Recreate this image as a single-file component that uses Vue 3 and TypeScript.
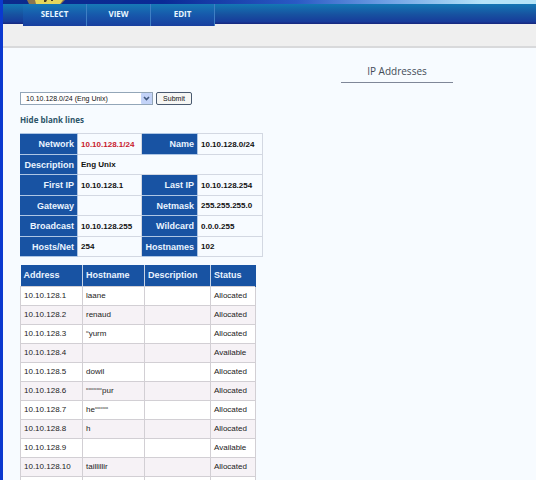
<script setup lang="ts">
import { ref } from 'vue'

interface Host {
  address: string
  hostname: string
  description: string
  status: string
}

interface Field {
  label: string
  value: string
  alert?: boolean
}

const menu: string[] = ['SELECT', 'VIEW', 'EDIT']
const subnets: string[] = ['10.10.128.0/24 (Eng Unix)']
const subnet = ref<string>(subnets[0])

const network: Field[][] = [
  [{ label: 'Network', value: '10.10.128.1/24', alert: true }, { label: 'Name', value: '10.10.128.0/24' }],
  [{ label: 'Description', value: 'Eng Unix' }],
  [{ label: 'First IP', value: '10.10.128.1' }, { label: 'Last IP', value: '10.10.128.254' }],
  [{ label: 'Gateway', value: '' }, { label: 'Netmask', value: '255.255.255.0' }],
  [{ label: 'Broadcast', value: '10.10.128.255' }, { label: 'Wildcard', value: '0.0.0.255' }],
  [{ label: 'Hosts/Net', value: '254' }, { label: 'Hostnames', value: '102' }],
]

const hosts: Host[] = [
  { address: '10.10.128.1', hostname: 'laane', description: '', status: 'Allocated' },
  { address: '10.10.128.2', hostname: 'renaud', description: '', status: 'Allocated' },
  { address: '10.10.128.3', hostname: '“yurm', description: '', status: 'Allocated' },
  { address: '10.10.128.4', hostname: '', description: '', status: 'Available' },
  { address: '10.10.128.5', hostname: 'dowil', description: '', status: 'Allocated' },
  { address: '10.10.128.6', hostname: '““““““pur', description: '', status: 'Allocated' },
  { address: '10.10.128.7', hostname: 'he“““““', description: '', status: 'Allocated' },
  { address: '10.10.128.8', hostname: 'h', description: '', status: 'Allocated' },
  { address: '10.10.128.9', hostname: '', description: '', status: 'Available' },
  { address: '10.10.128.10', hostname: 'taillillir', description: '', status: 'Allocated' },
  { address: '', hostname: '', description: '', status: '' },
]
</script>

<template>
  <div class="page">
    <header>
      <div class="banner">
        <svg class="emblem" viewBox="0 0 40 4" preserveAspectRatio="none" aria-hidden="true">
          <path d="M0 0H38L34 4H2Z" fill="#8b7650" />
          <path d="M8 0H36L33 4H9Z" fill="#e6d75c" />
          <path d="M17 0h3l-1 2h-2zM24 0h2v1h-2z" fill="#4b4020" />
        </svg>
      </div>
      <nav class="menu">
        <a v-for="item in menu" :key="item" href="#">{{ item }}</a>
      </nav>
      <div class="subbar"></div>
    </header>

    <main>
      <h1>IP Addresses</h1>
      <form class="picker" @submit.prevent>
        <span class="drop">
          <select v-model="subnet" aria-label="Subnet">
            <option v-for="s in subnets" :key="s">{{ s }}</option>
          </select>
          <svg class="arrow" viewBox="0 0 11 11" aria-hidden="true">
            <rect width="11" height="11" rx="1" fill="#c3d3f8" />
            <path d="M3 4l2.500 2.500L8 4" fill="none" stroke="#41587f" stroke-width="1.600" />
          </svg>
        </span>
        <button type="submit">Submit</button>
      </form>
      <a class="toggle" href="#">Hide blank lines</a>

      <table class="network">
        <colgroup>
          <col class="label" />
          <col class="first" />
          <col class="label2" />
          <col class="second" />
        </colgroup>
        <tbody>
          <tr v-for="(row, i) in network" :key="i">
            <template v-for="f in row" :key="f.label">
              <th scope="row">{{ f.label }}</th>
              <td :class="{ alert: f.alert }" :colspan="row.length === 1 ? 3 : 1">{{ f.value }}</td>
            </template>
          </tr>
        </tbody>
      </table>

      <table class="hosts">
        <thead>
          <tr>
            <th class="address" scope="col">Address</th>
            <th class="hostname" scope="col">Hostname</th>
            <th class="description" scope="col">Description</th>
            <th class="status" scope="col">Status</th>
          </tr>
        </thead>
        <tbody>
          <tr v-for="(h, i) in hosts" :key="i">
            <td>{{ h.address }}</td>
            <td>{{ h.hostname }}</td>
            <td>{{ h.description }}</td>
            <td>{{ h.status }}</td>
          </tr>
        </tbody>
      </table>
    </main>
  </div>
</template>

<style>
body {
  overflow: hidden;
  background: #f7fbff;
}
</style>

<style scoped>
* {
  box-sizing: border-box;
}
.page {
  height: 100vh;
  overflow: hidden;
  border-left: 3px solid #0b39cf;
  font-family: "Liberation Sans", Arial, sans-serif;
  font-size: 8px;
  color: #222;
}
.banner {
  height: 4px;
  padding-left: 24px;
  background: linear-gradient(90deg, #0c2a8c 0, #0a2a96 30%, #2a59c4 55%, #6fa0e4 72%, #b4e4f8 90%);
}
.emblem {
  display: block;
  width: 40px;
  height: 4px;
}
.menu {
  display: flex;
  height: 20px;
  padding-left: 20px;
  background: linear-gradient(#1477b4, #17509f 55%, #173c9b 88%, #16267c);
}
.menu a {
  width: 64px;
  height: 22px;
  border-right: 1px solid #3f7fc4;
  background: linear-gradient(#1779b6, #1758ab 50%, #183f9f);
  color: #e8f6ff;
  font-family: "Open Sans", sans-serif;
  font-weight: 700;
  line-height: 20px;
  text-align: center;
  text-decoration: none;
}
.subbar {
  height: 24px;
  border-bottom: 2px solid #d8d9db;
  background: #efefef;
}
main {
  padding: 14px 17px 0;
}
h1 {
  width: 112px;
  height: 21px;
  margin: 0 66px 9px auto;
  border-bottom: 1px solid #7f8798;
  color: #444c58;
  font-family: "Open Sans", sans-serif;
  font-size: 10px;
  font-weight: 400;
  line-height: 18px;
  text-align: center;
}
.picker {
  display: flex;
  gap: 3px;
}
.drop {
  display: grid;
  width: 133px;
}
.drop > * {
  grid-area: 1 / 1;
}
select {
  height: 13px;
  padding: 0 14px 0 5px;
  appearance: none;
  border: 1px solid #93a6b8;
  border-radius: 0;
  background: #fff;
  color: #111;
  font-family: inherit;
  font-size: 7px;
  line-height: 11px;
}
.arrow {
  justify-self: end;
  align-self: center;
  width: 11px;
  height: 11px;
  margin-right: 1px;
  pointer-events: none;
}
button {
  width: 36px;
  height: 13px;
  padding: 0;
  border: 1px solid #4a5a70;
  border-radius: 2px;
  background: #f6f6f4;
  color: #111;
  font-family: inherit;
  font-size: 7px;
  line-height: 11px;
}
.toggle {
  display: block;
  width: max-content;
  margin: 9px 0 7px;
  color: #2c5468;
  font-family: "Open Sans", sans-serif;
  font-weight: 700;
  line-height: 12px;
  text-decoration: none;
}
table {
  border-collapse: collapse;
  table-layout: fixed;
}
th,
td {
  padding: 0 3px;
  white-space: nowrap;
  text-align: left;
}
th {
  background: #1853a3;
  color: #eaf4ff;
  font-size: 9px;
  font-weight: 700;
}
.network {
  width: 242px;
  margin-bottom: 8px;
}
.network tr {
  height: 20px;
}
.network tr:nth-child(odd) {
  height: 21px;
}
.label {
  width: 57px;
}
.label2 {
  width: 56px;
}
.first {
  width: 64px;
}
.second {
  width: 65px;
}
.network th {
  border: 1px solid #aec6e4;
  border-left-color: #1853a3;
  text-align: right;
}
.network td {
  border: 1px solid #d3d8e2;
  color: #111;
  font-weight: 700;
}
.network .alert {
  color: #c8202e;
}
.hosts {
  width: 235px;
}
.hosts tr {
  height: 19px;
}
.hosts thead tr {
  height: 21px;
}
.hosts th {
  border-right: 1px solid #c8d4e6;
}
.hosts th:last-child {
  border-right-color: #1853a3;
}
.hosts td {
  border: 1px solid #d2cfd4;
  background: #fff;
}
.hosts tbody tr:nth-child(even) td {
  background: #f6f2f6;
}
.hosts thead {
  border-bottom: 1px solid #c98f6a;
}
.address,
.hostname {
  width: 62px;
}
.description {
  width: 66px;
}
.status {
  width: 45px;
}
</style>
